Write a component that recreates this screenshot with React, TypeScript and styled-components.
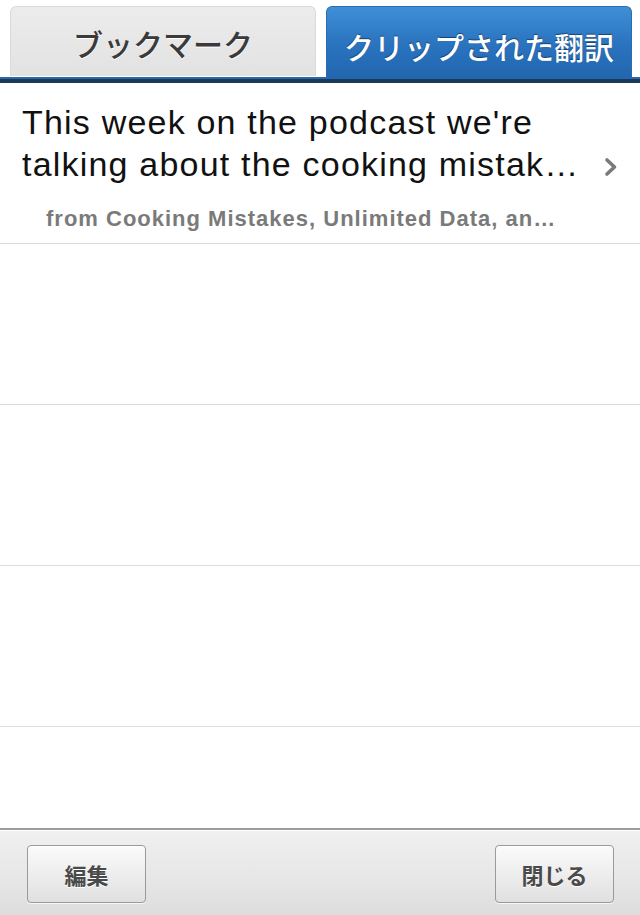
import styled, { createGlobalStyle } from "styled-components";

const GlobalStyle = createGlobalStyle`
  html, body {
    margin: 0;
    padding: 0;
    background: #ffffff;
    overflow: hidden;
  }
  * {
    box-sizing: border-box;
  }
`;

const clips = [
  {
    title:
      "This week on the podcast we're talking about the cooking mistakes we all make, unlimited data plans, and more.",
    source: "from Cooking Mistakes, Unlimited Data, and More",
  },
];

const emptyRows = 4;

const App = () => {
  return (
    <Screen>
      <GlobalStyle />
      <TabBar>
        <Tab $active={false}>ブックマーク</Tab>
        <Tab $active>クリップされた翻訳</Tab>
      </TabBar>
      <List>
        {clips.map((clip) => (
          <Row key={clip.title}>
            <RowBody>
              <Title>{clip.title}</Title>
              <Source>{clip.source}</Source>
            </RowBody>
            <Chevron viewBox="0 0 14 20">
              <path
                d="M3 3 L10.5 10 L3 17"
                fill="none"
                stroke="#7a7a7a"
                strokeWidth="3.6"
                strokeLinecap="round"
                strokeLinejoin="round"
              />
            </Chevron>
          </Row>
        ))}
        {Array.from({ length: emptyRows }).map((_, i) => (
          <EmptyRow key={i} />
        ))}
      </List>
      <Toolbar>
        <ToolButton>編集</ToolButton>
        <ToolButton>閉じる</ToolButton>
      </Toolbar>
    </Screen>
  );
};

const Screen = styled.div`
  display: flex;
  flex-direction: column;
  width: 640px;
  height: 915px;
  background: #ffffff;
  font-family: "Liberation Sans", Arial, "Noto Sans CJK JP", sans-serif;
`;

const TabBar = styled.div`
  display: flex;
  align-items: flex-end;
  gap: 10px;
  height: 83px;
  padding: 0 8px 0 10px;
  border-bottom: 4px solid #1b3a5a;
  box-shadow: inset 0 -2px 0 #2c68a6;
  background: #ffffff;
  flex-shrink: 0;
`;

const Tab = styled.div<{ $active: boolean }>`
  display: flex;
  align-items: center;
  justify-content: center;
  flex: 1;
  height: ${(p) => (p.$active ? "73px" : "70px")};
  margin-bottom: ${(p) => (p.$active ? "0" : "3px")};
  padding-top: ${(p) => (p.$active ? "5px" : "2px")};
  border-radius: 6px 6px 0 0;
  font-family: "Noto Sans CJK JP", "Liberation Sans", sans-serif;
  font-size: 30px;
  font-weight: 500;
  color: ${(p) => (p.$active ? "#ffffff" : "#3a3a3a")};
  background: ${(p) =>
    p.$active
      ? "linear-gradient(to bottom, #3f8fd6 0%, #2b74c0 50%, #2166ae 100%)"
      : "linear-gradient(to bottom, #ececec 0%, #e2e2e2 100%)"};
  border: 1px solid ${(p) => (p.$active ? "#2a6cb0" : "#dadada")};
  border-bottom: none;
  text-shadow: ${(p) =>
    p.$active ? "0 -1px 1px rgba(0, 0, 0, 0.45)" : "0 1px 0 #ffffff"};
`;

const List = styled.div`
  display: flex;
  flex-direction: column;
  flex: 1;
  overflow: hidden;
`;

const Row = styled.div`
  display: flex;
  align-items: flex-start;
  height: 161px;
  padding: 18px 22px 0 22px;
  border-bottom: 1px solid #dcdcdc;
  flex-shrink: 0;
`;

const RowBody = styled.div`
  display: flex;
  flex-direction: column;
  flex: 1;
  min-width: 0;
  padding-right: 18px;
`;

const Title = styled.div`
  font-size: 34px;
  line-height: 42px;
  letter-spacing: 1.2px;
  color: #111111;
  display: -webkit-box;
  -webkit-line-clamp: 2;
  -webkit-box-orient: vertical;
  overflow: hidden;
`;

const Source = styled.div`
  margin-top: 21px;
  padding-left: 24px;
  padding-right: 26px;
  font-size: 22px;
  line-height: 26px;
  font-weight: bold;
  letter-spacing: 1px;
  color: #7a7a7a;
  white-space: nowrap;
  overflow: hidden;
  text-overflow: ellipsis;
`;

const Chevron = styled.svg`
  width: 14px;
  height: 20px;
  margin-top: 56px;
  flex-shrink: 0;
`;

const EmptyRow = styled.div`
  height: 161px;
  border-bottom: 1px solid #dcdcdc;
  flex-shrink: 0;
`;

const Toolbar = styled.div`
  display: flex;
  align-items: center;
  justify-content: space-between;
  height: 87px;
  padding: 0 26px 0 27px;
  border-top: 2px solid #9c9c9c;
  box-shadow: inset 0 1px 0 #ffffff;
  background: linear-gradient(to bottom, #f0f0f0 0%, #e6e6e6 60%, #dddddd 100%);
  flex-shrink: 0;
`;

const ToolButton = styled.div`
  display: flex;
  align-items: center;
  justify-content: center;
  width: 119px;
  height: 58px;
  border: 1px solid #9a9a9a;
  border-radius: 4px;
  background: linear-gradient(to bottom, #fbfbfb 0%, #ececec 55%, #e0e0e0 100%);
  box-shadow: inset 0 1px 0 #ffffff, 0 1px 0 rgba(255, 255, 255, 0.7);
  font-family: "Noto Sans CJK JP", sans-serif;
  font-size: 22px;
  font-weight: bold;
  color: #4a4a4a;
  text-shadow: 0 1px 0 #ffffff;
  margin-top: 2px;
`;

export default App;
